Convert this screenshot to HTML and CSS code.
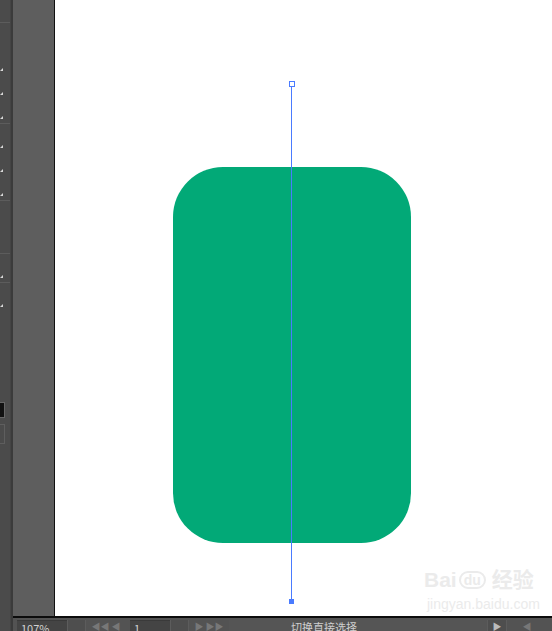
FILE: index.html
```html
<!DOCTYPE html>
<html>
<head>
<meta charset="utf-8">
<link rel="stylesheet" href="styles.css">
</head>
<body>
<div class="app">
  <div class="tools">
    <div class="sep s1"></div>
    <div class="tri t1"></div>
    <div class="tri t2"></div>
    <div class="tri t3"></div>
    <div class="sep s2"></div>
    <div class="tri t4"></div>
    <div class="tri t5"></div>
    <div class="tri t6"></div>
    <div class="sep s3"></div>
    <div class="sep s4"></div>
    <div class="tri t7"></div>
    <div class="sep s5"></div>
    <div class="tri t8"></div>
    <div class="swatch sw1"></div>
    <div class="swatch sw2"></div>
  </div>
  <div class="divider"></div>
  <div class="main">
    <div class="work">
      <div class="gutter"></div>
      <div class="canvas">
        <div class="shape"></div>
        <div class="wm">
          <div class="wm1">Bai<span class="du">du</span> 经验</div>
          <div class="wm2">jingyan.baidu.com</div>
        </div>
        <div class="path"></div>
        <div class="handle top"></div>
        <div class="handle bottom"></div>
      </div>
    </div>
    <div class="status">
      <div class="field zoom">107%</div>
      <div class="btn"></div>
      <div class="nav">◀◀ ◀</div>
      <div class="field page">1</div>
      <div class="btn"></div>
      <div class="nav">▶ ▶▶</div>
      <div class="info">切换直接选择</div>
      <div class="btn end">▶</div>
      <div class="nav">◀</div>
    </div>
  </div>
</div>
</body>
</html>
```

FILE: styles.css
```css
html, body {
  margin: 0;
  padding: 0;
  background: #535353;
  overflow: hidden;
}
.app {
  display: flex;
  width: 552px;
  height: 631px;
  font-family: "Noto Sans CJK SC", "Liberation Sans", sans-serif;
}
.tools {
  position: relative;
  width: 10px;
  background: #4b4b4b;
}
.sep {
  position: absolute;
  left: 0;
  width: 10px;
  height: 1px;
  background: #5c5c5c;
}
.s1 { top: 22px; }
.s2 { top: 123px; }
.s3 { top: 200px; }
.s4 { top: 253px; }
.s5 { top: 282px; }
.tri {
  position: absolute;
  left: 0;
  width: 0;
  height: 0;
  border-left: 3px solid transparent;
  border-bottom: 3px solid #d8d8d8;
}
.t1 { top: 68px; }
.t2 { top: 92px; }
.t3 { top: 116px; }
.t4 { top: 145px; }
.t5 { top: 169px; }
.t6 { top: 193px; }
.t7 { top: 275px; }
.t8 { top: 304px; }
.swatch {
  position: absolute;
  left: -2px;
  width: 5px;
  border: 1px solid #666;
}
.sw1 { top: 402px; height: 14px; background: #111; }
.sw2 { top: 424px; height: 18px; background: #4b4b4b; border-color: #5e5e5e; }
.divider {
  width: 3px;
  background: #3b3b3b;
  border-left: 1px solid #444;
  box-sizing: border-box;
}
.main {
  flex: 1;
  display: flex;
  flex-direction: column;
}
.work {
  display: flex;
  height: 616px;
  border-bottom: 2px solid #0c0c0c;
}
.gutter {
  width: 41px;
  background: #5e5e5e;
  border-right: 1px solid #111;
}
.canvas {
  position: relative;
  flex: 1;
  background: #ffffff;
  overflow: hidden;
}
.shape {
  position: absolute;
  left: 118px;
  top: 167px;
  width: 238px;
  height: 376px;
  border-radius: 50px;
  background: #02a977;
}
.path {
  position: absolute;
  z-index: 2;
  left: 236px;
  top: 85px;
  width: 1px;
  height: 516px;
  background: #4a7bff;
}
.handle {
  position: absolute;
  z-index: 3;
  box-sizing: border-box;
}
.handle.top {
  left: 234px;
  top: 81px;
  width: 6px;
  height: 6px;
  border: 1px solid #4a7bff;
  background: #fff;
}
.handle.bottom {
  left: 234px;
  top: 599px;
  width: 5px;
  height: 5px;
  background: #4a7bff;
}
.wm {
  position: absolute;
  left: 369px;
  top: 569px;
  color: #ebebeb;
  font-family: "Liberation Sans", "Noto Sans CJK SC", sans-serif;
}
.wm1 {
  font-size: 21px;
  font-weight: bold;
  line-height: 22px;
  white-space: nowrap;
}
.wm1 .du {
  display: inline-block;
  border: 2px solid #ebebeb;
  border-radius: 10px;
  padding: 0 3px;
  font-size: 14px;
  line-height: 14px;
  margin-left: 2px;
  vertical-align: 2px;
}
.wm2 {
  font-size: 14px;
  line-height: 16px;
  padding-left: 3px;
  padding-top: 5px;
  white-space: nowrap;
}
.status {
  flex: 1;
  display: flex;
  align-items: flex-start;
  background: #535353;
  overflow: hidden;
  font-size: 11px;
  color: #d0d0d0;
  padding-top: 2px;
  box-sizing: border-box;
}
.field {
  height: 14px;
  background: #444;
  border-top: 1px solid #3a3a3a;
  line-height: 14px;
  padding-left: 4px;
  box-sizing: border-box;
  margin-left: 4px;
}
.zoom { width: 50px; }
.page { width: 40px; }
.btn {
  width: 17px;
  height: 14px;
  background: #4e4e4e;
  border-left: 1px solid #5c5c5c;
}
.nav {
  width: 40px;
  height: 14px;
  color: #777;
  font-size: 9px;
  line-height: 14px;
  text-align: center;
  border-left: 1px solid #5c5c5c;
}
.info {
  width: 196px;
  padding-left: 62px;
  line-height: 14px;
  height: 14px;
  color: #cfcfcf;
  font-size: 11px;
  background: #555;
}
.end {
  font-size: 9px;
  color: #bbb;
  text-align: center;
  line-height: 14px;
  width: 18px;
}
```
